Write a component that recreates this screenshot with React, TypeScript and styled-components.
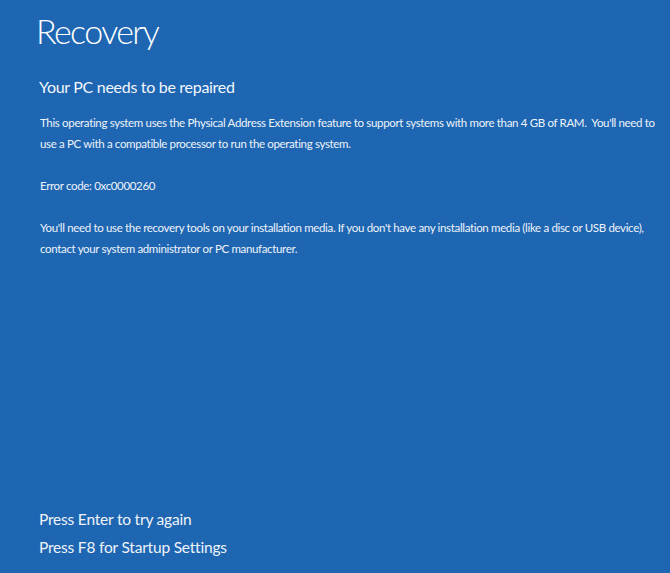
import * as React from "react";
import styled, { createGlobalStyle } from "styled-components";

const Global = createGlobalStyle`
  html, body {
    margin: 0;
    padding: 0;
    background: #1e66b2;
  }
`;

const Screen = styled.div`
  width: 670px;
  height: 573px;
  box-sizing: border-box;
  padding: 8px 0 12px 38px;
  display: flex;
  flex-direction: column;
  background: #1e66b2;
  color: #ffffff;
  font-family: "Lato", "Open Sans", sans-serif;
  overflow: hidden;
`;

const Title = styled.h1`
  margin: 0 0 0 -2px;
  font-size: 34px;
  font-weight: 300;
  line-height: 46px;
  letter-spacing: -1.6px;
`;

const Subtitle = styled.h2`
  margin: 22px 0 0 1px;
  font-size: 16px;
  font-weight: 400;
  line-height: 22px;
  letter-spacing: -0.3px;
  color: #f2f6fb;
`;

const Body = styled.div`
  margin: 14px 0 0 2px;
  display: flex;
  flex-direction: column;
  gap: 21px;
`;

const Para = styled.p`
  margin: 0;
  font-size: 11.5px;
  line-height: 21px;
  letter-spacing: -0.34px;
  white-space: nowrap;
  color: #eef3f9;
`;

const Options = styled.div`
  margin-top: auto;
  margin-left: 1px;
  display: flex;
  flex-direction: column;
`;

const Option = styled.div`
  font-size: 15.5px;
  line-height: 28px;
  letter-spacing: -0.2px;
  color: #eef3f9;
`;

export default function App() {
  return (
    <>
      <Global />
      <Screen>
        <Title>Recovery</Title>
        <Subtitle>Your PC needs to be repaired</Subtitle>
        <Body>
          <Para>
            This operating system uses the Physical Address Extension feature to support systems with more than 4 GB of RAM.&nbsp; You'll need to
            <br />
            use a PC with a compatible processor to run the operating system.
          </Para>
          <Para>Error code: 0xc0000260</Para>
          <Para>
            You'll need to use the recovery tools on your installation media. If you don't have any installation media (like a disc or USB device),
            <br />
            contact your system administrator or PC manufacturer.
          </Para>
        </Body>
        <Options>
          <Option>Press Enter to try again</Option>
          <Option>Press F8 for Startup Settings</Option>
        </Options>
      </Screen>
    </>
  );
}
